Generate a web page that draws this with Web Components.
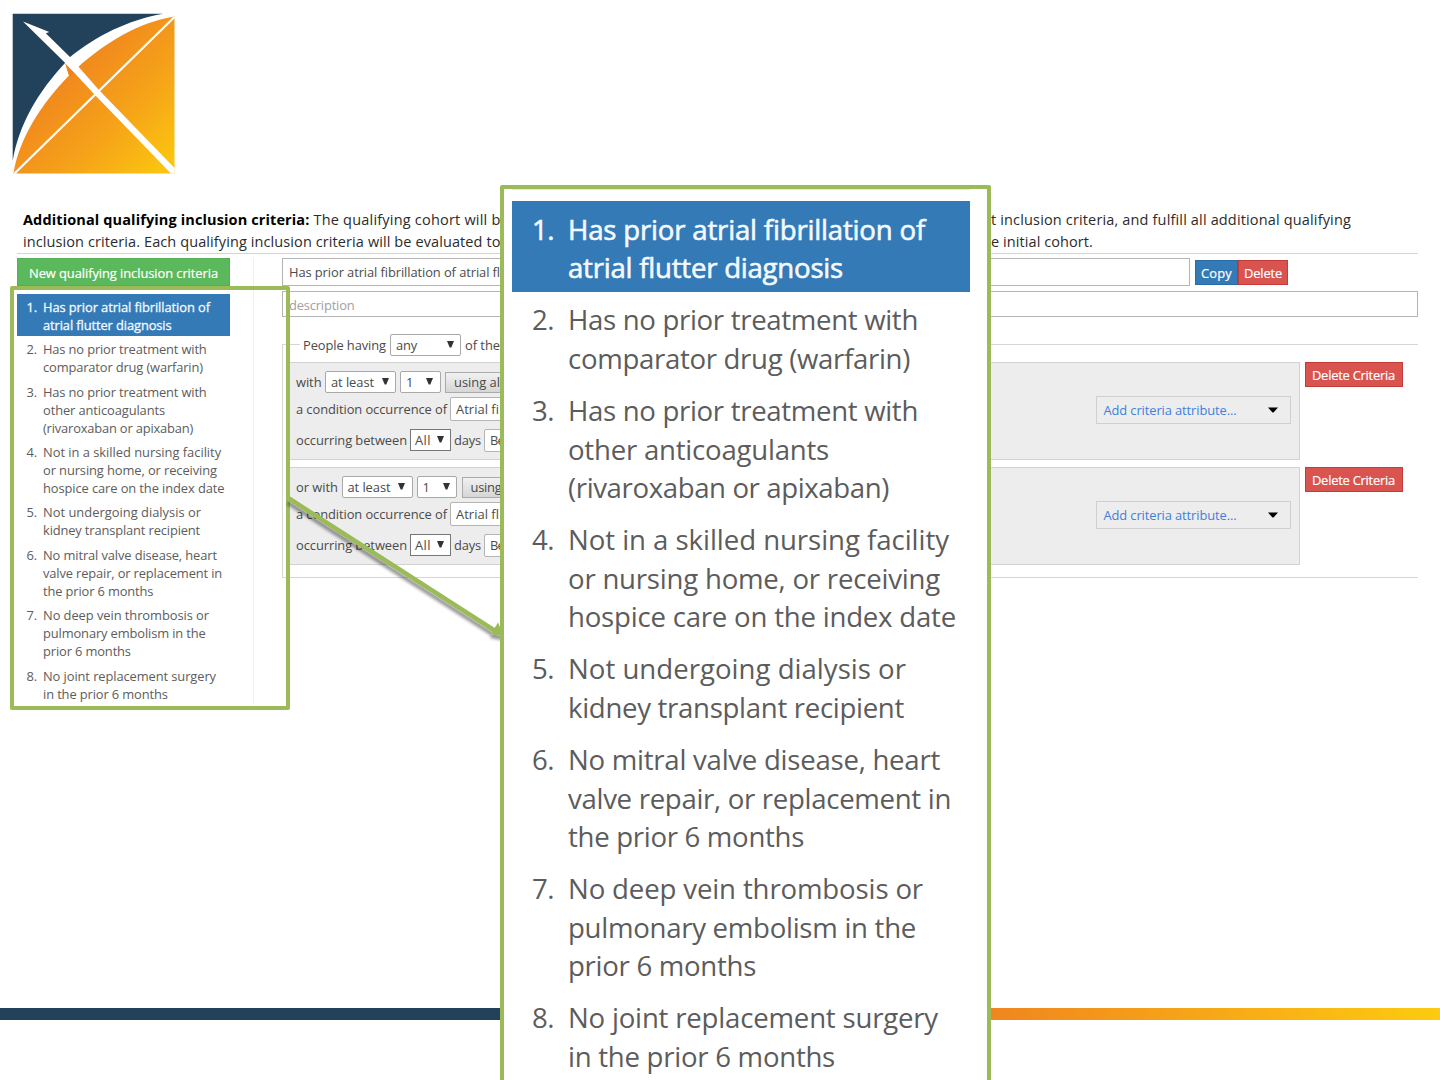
<!DOCTYPE html>
<html lang="en">
<head>
<meta charset="utf-8">
<title>Additional qualifying inclusion criteria</title>
<style>
html,body{margin:0;padding:0}
body{width:1440px;height:1080px;overflow:hidden;background:#fff;font-family:"Open Sans","Noto Sans",sans-serif}
</style>
</head>
<body>
<cohort-slide></cohort-slide>
<script>
const make=(host,html)=>{const r=host.attachShadow({mode:'open'});r.innerHTML=html;return r;};

/* One line of text tracked to a given width */
customElements.define('fit-text',class extends HTMLElement{
  connectedCallback(){
    if(this.shadowRoot)return;
    const r=make(this,`<style>:host{display:block;white-space:nowrap;flex:none}span{display:inline-block}</style><span><slot></slot></span>`);
    const w=parseFloat(this.getAttribute('w'));
    if(!w)return;
    const s=r.querySelector('span'),n=this.textContent.length;
    const nat=s.getBoundingClientRect().width;
    s.style.letterSpacing=((w-nat)/n)+'px';
    this.style.width=w+'px';
  }
});

customElements.define('brand-logo',class extends HTMLElement{
  connectedCallback(){make(this,`<style>:host{display:block;height:185px}svg{display:block}</style>
  <svg width="190" height="185" viewBox="0 0 190 185">
   <defs><linearGradient id="g" gradientUnits="userSpaceOnUse" x1="60" y1="60" x2="174" y2="172"><stop offset="0" stop-color="#f0831e"/><stop offset=".5" stop-color="#f5a119"/><stop offset="1" stop-color="#fcc90f"/></linearGradient></defs>
   <path d="M12.7 13.8H163C128 20 96 36 69.500 57.500L65 63C38 92 19 124 12.700 161Z" fill="#21425a"/>
   <path d="M13.500 173.500C19 139 41 104 69 75.500L65.300 63.500L78 67C105 43 139 22 174.500 16.500V173.500Z" fill="url(#g)"/>
   <path d="M65.300 63.500L70 57L84 60L77.500 67.500L70 70Z" fill="#fff"/>
   <path d="M65.300 63.500L75.500 73.500L69 75.500Z" fill="#f0831e"/>
   <path d="M14.500 173.500L174.500 17" stroke="#fff" stroke-width="2.200"/>
   <path d="M23 21.500L49.300 32L45.800 33.300L70.500 57.500L98.500 89.500L174.500 168V173.500H171L94.500 94.500L65 62.800Z" fill="#fff"/>
  </svg>`);}
});

const ITEMS=[
 [['Has prior atrial fibrillation of',357],['atrial flutter diagnosis',275]],
 [['Has no prior treatment with',350],['comparator drug (warfarin)',342]],
 [['Has no prior treatment with',350],['other anticoagulants',261],['(rivaroxaban or apixaban)',321]],
 [['Not in a skilled nursing facility',381],['or nursing home, or receiving',372],['hospice care on the index date',388]],
 [['Not undergoing dialysis or',338],['kidney transplant recipient',336]],
 [['No mitral valve disease, heart',372],['valve repair, or replacement in',383],['the prior 6 months',236]],
 [['No deep vein thrombosis or',355],['pulmonary embolism in the',348],['prior 6 months',188]],
 [['No joint replacement surgery',370],['in the prior 6 months',267]]];

customElements.define('criteria-list',class extends HTMLElement{
  connectedCallback(){
    const big=this.hasAttribute('big'),k=big?1:.4675;
    const v=big?{lh:38.35,pt:8.6,pb:5.5,w:458,nl:20,nw:36,fs:27.6}:{lh:18,pt:4.6,pb:1.76,w:213,nl:9.500,nw:16.500,fs:12.9};
    make(this,`<style>:host{display:block;color:#5c5c5c;width:${v.w}px;font-size:${v.fs}px;line-height:${v.lh}px}
     .i{display:flex;padding:${v.pt}px 0 ${v.pb}px ${v.nl}px}
     .n{width:${v.nw}px;flex:none}
     .on{background:#337ab7;color:#f4f9ff;-webkit-text-stroke:.022em #f4f9ff}
    </style>`+ITEMS.map((it,i)=>`<div class="i${i?'':' on'}"><div class="n"><fit-text w="${22*k}">${i+1}.</fit-text></div><div>${it.map(l=>`<fit-text w="${(l[1]*k).toFixed(2)}">${l[0]}</fit-text>`).join('')}</div></div>`).join(''));
  }
});

customElements.define('pick-box',class extends HTMLElement{
  connectedCallback(){make(this,`<style>:host{display:flex;box-sizing:border-box;flex:none;align-items:center;justify-content:space-between;height:22px;background:#fff;border:1px solid #a9a9a9;border-radius:2px;padding:0 6.500px 0 5px;color:#4a4a4a}
   :host([dark]){border-color:#777;border-radius:0;padding:0 6px 0 4px}
   svg{display:block;margin-top:-1px}</style><slot></slot><svg width="7" height="7"><path d="M0 0H7L4.300 6.500H2.700Z" fill="#333"/></svg>`);}
});

customElements.define('text-box',class extends HTMLElement{
  connectedCallback(){make(this,`<style>:host{display:flex;box-sizing:border-box;flex:none;align-items:center;background:#fff;border:1px solid #b4b4b4;color:#4c4c4c;padding-left:6px}</style><slot></slot>`);}
});

customElements.define('action-button',class extends HTMLElement{
  connectedCallback(){make(this,`<style>:host{display:flex;box-sizing:border-box;flex:none;align-items:center;justify-content:center;height:25px;background:#d9534f;border:1px solid #c23d3a;color:#fff;-webkit-text-stroke:.015em #fff}
   :host([kind=blue]){background:#337ab7;border-color:#2b6ba3}
   :host([kind=green]){background:#5cb85c;border-color:#55b055;padding-top:2px}
   :host([kind=grey]){background:linear-gradient(#f1f1f1,#d6d6d6);border-color:#aaa;color:#4a4a4a;height:21px;justify-content:flex-start;padding-left:8px;-webkit-text-stroke:0}</style><slot></slot>`);}
});

customElements.define('criteria-group',class extends HTMLElement{
  connectedCallback(){
    const or=this.hasAttribute('or');
    make(this,`<style>:host{display:flex;gap:5px;align-items:flex-start;height:105px}
     .box{box-sizing:border-box;width:1011.500px;height:98px;background:#ededed;border:1px solid #d2d2d2;display:flex;justify-content:space-between;padding:0 8px 0 7px}
     .rows{padding-top:6px}
     .r{display:flex;align-items:center}
     .a{height:26px}.b{height:28px}.c{height:34px}
     .sel{box-sizing:border-box;width:195px;height:28px;margin-top:33px;border:1px solid #d0d0d0;display:flex;align-items:center;justify-content:space-between;padding:0 12px 0 7px;color:#3e7fe0}
    </style>
    <div class="box"><div class="rows">
     <div class="r a"><fit-text w="${or?42:25.500}">${or?'or with':'with'}</fit-text>
      <pick-box style="width:71px;margin-left:3.500px"><fit-text w="43">at least</fit-text></pick-box>
      <pick-box style="width:40.500px;margin-left:4px"><fit-text w="7">1</fit-text></pick-box>
      <action-button kind="grey" style="width:130px;margin-left:4.500px"><fit-text w="${or?31:46}">${or?'using':'using al'}</fit-text></action-button></div>
     <div class="r b"><fit-text w="151">a condition occurrence of</fit-text>
      <text-box style="height:24px;width:300px;margin-left:3px;border-radius:2px;padding-left:5px"><fit-text w="43">${or?'Atrial fl':'Atrial fi'}</fit-text></text-box></div>
     <div class="r c"><fit-text w="111">occurring between</fit-text>
      <pick-box dark style="width:41px;margin:0 3px"><fit-text w="16">All</fit-text></pick-box>
      <fit-text w="27">days</fit-text>
      <text-box style="height:23px;width:90px;margin-left:3px;border-radius:2px;padding-left:5px"><fit-text w="14">Be</fit-text></text-box></div>
    </div>
    <div class="sel"><fit-text w="133">Add criteria attribute...</fit-text><svg width="10" height="6"><path d="M0 .5H10L5.500 5.500H4.500Z" fill="#000"/></svg></div></div>
    <action-button style="width:98px"><fit-text w="83">Delete Criteria</fit-text></action-button>`);
  }
});

customElements.define('criteria-editor',class extends HTMLElement{
  connectedCallback(){make(this,`<style>:host{display:block;padding:24px 22px 0 17px;font-size:12.900px;line-height:18px;color:#4a4a4a}
    .intro{font-size:14.500px;line-height:22.500px;color:#2b2b2b;height:44px;border-bottom:1px solid #d5d5d5;padding-left:6px;display:flex;flex-direction:column}
    .intro div{display:flex;height:22px}
    b{color:#000;font-weight:700}
    .cols{display:flex;padding-top:4px}
    .side{width:236px;height:447px;border-right:1px solid #efefef}
    .main{width:1136px;margin-left:28px}
    .top{display:flex;align-items:center;height:28px}
    .set{box-sizing:border-box;height:234px;margin-top:27px;border:1px solid #d6d6d6;border-right:0;padding:0 0 0 5px}
    .leg{display:flex;align-items:center;width:230px;height:24px;margin:-12px 0 5px 12px;padding-left:3px;background:#fff}
    .ph{color:#a0a0a0}
   </style>
   <div class="intro"><div><fit-text w="286.500"><b>Additional qualifying inclusion criteria:</b></fit-text><fit-text w="187" style="margin-left:4px">The qualifying cohort will b</fit-text><fit-text w="360" style="margin-left:490.500px">t inclusion criteria, and fulfill all additional qualifying</fit-text></div>
   <div><fit-text w="477.500">inclusion criteria. Each qualifying inclusion criteria will be evaluated to</fit-text><fit-text w="102" style="margin-left:490.500px">e initial cohort.</fit-text></div></div>
   <div class="cols">
    <div class="side"><action-button kind="green" style="width:213px;height:28px;margin-bottom:7.500px"><fit-text w="189">New qualifying inclusion criteria</fit-text></action-button><criteria-list></criteria-list></div>
    <div class="main">
     <div class="top"><text-box style="width:908px;height:28px"><fit-text w="211">Has prior atrial fibrillation of atrial fl</fit-text></text-box>
      <action-button kind="blue" style="width:43px;margin-left:5px;padding-top:2px"><fit-text w="31">Copy</fit-text></action-button><action-button style="width:50px;padding-top:2px"><fit-text w="38">Delete</fit-text></action-button></div>
     <text-box style="width:1136px;height:26px;margin-top:5px;padding-top:2px"><fit-text class="ph" w="65.500">description</fit-text></text-box>
     <div class="set"><div class="leg"><fit-text w="83">People having</fit-text><pick-box style="width:71px;margin:0 4px"><fit-text w="21">any</fit-text></pick-box><fit-text w="35">of the</fit-text></div>
      <criteria-group></criteria-group><criteria-group or></criteria-group></div>
    </div>
   </div>`);}
});

customElements.define('callout-overlay',class extends HTMLElement{
  connectedCallback(){make(this,`<style>:host{position:absolute;inset:0;display:block}
    .src{position:absolute;box-sizing:border-box;left:10px;top:286px;width:280px;height:424px;border:4px solid #9bbb59;border-radius:2px}
    svg{position:absolute;left:0;top:0}
    .pop{position:absolute;box-sizing:border-box;left:500px;top:185px;width:491px;height:910px;border:4px solid #9bbb59;border-radius:2px;background:#fff;padding:0 0 0 8px}
    .edge{height:1px;width:458px;background:#e4e8e0;margin-bottom:11px}
   </style>
   <div class="src"></div>
   <svg width="520" height="700"><defs><filter id="s" x="-10%" y="-10%" width="120%" height="125%"><feDropShadow dx="-1" dy="4" stdDeviation="1.800" flood-color="#000" flood-opacity=".4"/></filter></defs>
    <g filter="url(#s)"><path d="M289 498.500L496 631.500" stroke="#9bbb59" stroke-width="4.500"/><path d="M504 636.500L498 622.500L491 634Z" fill="#9bbb59"/></g></svg>
   <div class="pop"><div class="edge"></div><criteria-list big></criteria-list></div>`);}
});

customElements.define('cohort-slide',class extends HTMLElement{
  connectedCallback(){make(this,`<style>:host{display:flex;flex-direction:column;position:relative;width:1440px;height:1080px;overflow:hidden}
    criteria-editor{height:799px;flex:none}
    .bar{display:flex;height:12px;flex:none}
    .bar i{width:720px}.n{background:#21425a}.o{background:linear-gradient(90deg,#ee7623,#f0861f 38%,#fdcb10)}
   </style><brand-logo></brand-logo><criteria-editor></criteria-editor><div class="bar"><i class="n"></i><i class="o"></i></div><callout-overlay></callout-overlay>`);}
});
</script>
</body>
</html>
